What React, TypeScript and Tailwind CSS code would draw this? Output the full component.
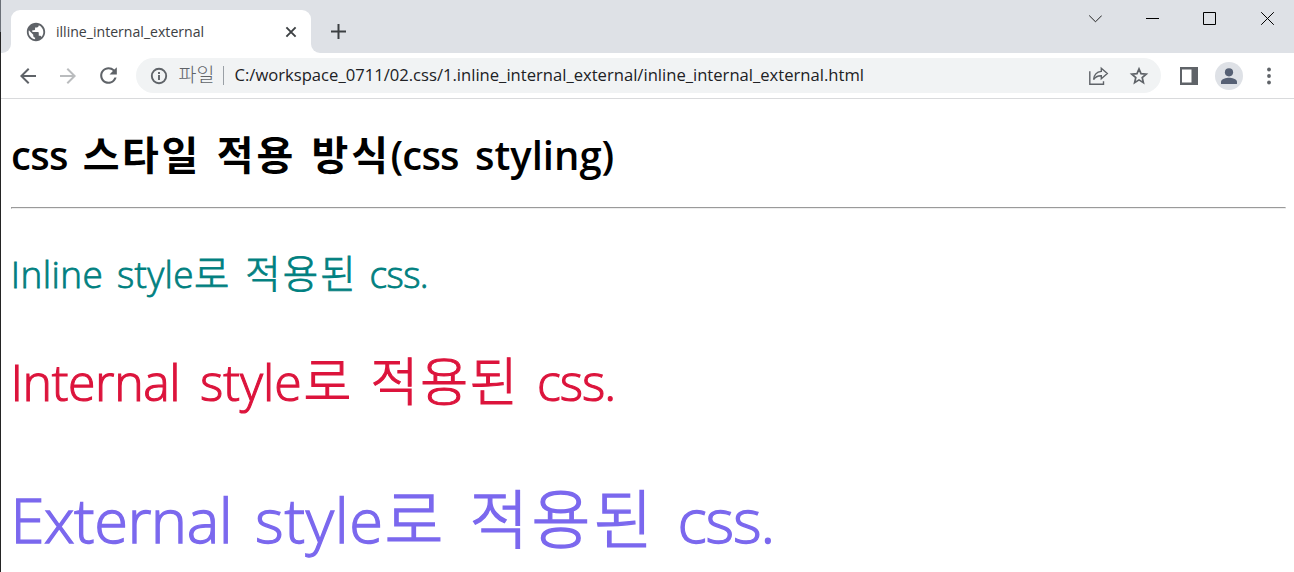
import type { ReactNode } from "react";
import { MdArrowBack, MdArrowForward, MdPublic, MdRefresh } from "react-icons/md";

const latin = "font-['Open_Sans','Noto_Sans_CJK_KR',sans-serif]";
const hangul = "font-['Noto_Sans_CJK_KR',sans-serif]";

function Run({ ko, className, children }: { ko?: boolean; className: string; children: ReactNode }) {
  return <span className={`shrink-0 whitespace-pre ${ko ? hangul : latin} ${className}`}>{children}</span>;
}

function TabStrip() {
  return (
    <div className="flex h-[53px] bg-[#dee1e6]">
      <div className="mt-auto h-2.5 w-2.5 bg-white">
        <div className="h-full w-full rounded-br-[9px] bg-[#dee1e6]" />
      </div>
      <div className="mt-2.5 flex w-[300px] items-center rounded-t-[9px] bg-white pl-[14px] pr-[14px]">
        <MdPublic className="size-[22px] shrink-0 text-[#5f6368]" />
        <span className={`ml-[9px] flex-1 whitespace-nowrap text-[14.1px] text-[#3c4043] ${latin}`}>illine_internal_external</span>
        <svg className="size-3" viewBox="0 0 12 12" fill="none" stroke="#3c4043" strokeWidth="1.9">
          <path d="M1.4 1.4 10.6 10.6M10.6 1.4 1.4 10.6" />
        </svg>
      </div>
      <div className="mt-auto h-2.5 w-2.5 bg-white">
        <div className="h-full w-full rounded-bl-[9px] bg-[#dee1e6]" />
      </div>
      <svg className="ml-[9px] mt-[23px] size-4" viewBox="0 0 16 16" fill="none" stroke="#3c4043" strokeWidth="2">
        <path d="M8.5 1v15M1 8.5h15" />
      </svg>
      <div className="ml-auto mr-[20px] mt-[12px] flex h-[13px]">
        <svg className="mr-[44px] size-[13px]" viewBox="0 0 13 13" fill="none" stroke="#222" strokeWidth="1">
          <path d="M.2 3.5 6.5 9.8 12.8 3.5" />
        </svg>
        <svg className="mr-[44px] size-[13px]" viewBox="0 0 13 13" fill="none" stroke="#000">
          <path d="M0 6.5h13" />
        </svg>
        <svg className="mr-[45px] size-[13px]" viewBox="0 0 13 13" fill="none" stroke="#000">
          <path d="M.5.5h12v12H.5z" />
        </svg>
        <svg className="size-[13px]" viewBox="0 0 13 13" fill="none" stroke="#000">
          <path d="M.2.2 12.8 12.8M12.8.2.2 12.8" />
        </svg>
      </div>
    </div>
  );
}

function InfoIcon() {
  return (
    <svg className="size-[18px] shrink-0" viewBox="0 0 18 18" fill="none" stroke="#5f6368" strokeWidth="1.9">
      <circle cx="9" cy="9" r="7.2" />
      <path d="M9 8v5M9 5v1.9" />
    </svg>
  );
}

function ShareIcon() {
  return (
    <svg className="size-[20px]" viewBox="0 0 20 20" fill="none" stroke="#5f6368" strokeWidth="1.4">
      <path d="M.8 5.3v12.9h13.7v-2.9" />
      <path d="M12.3 2.3 18.3 7.6 12.3 12.8v-3.1c-3.7-.1-6 1-7.7 3.9.4-4.9 3.2-7.7 7.7-8.2z" />
    </svg>
  );
}

function StarIcon() {
  return (
    <svg className="ml-[19.5px] mr-[12.5px] size-[20px]" viewBox="0 0 20 20" fill="none" stroke="#5f6368" strokeWidth="1.7">
      <path d="M10 2.9 12 7.7 17.2 8.1 13.2 11.5 14.4 16.6 10 13.9 5.6 16.6 6.8 11.5 2.8 8.1 8 7.7z" />
    </svg>
  );
}

function Toolbar() {
  return (
    <div className="flex h-[46px] items-center border-b border-[#d9dadc] bg-white pl-[15px]">
      <MdArrowBack className="size-6 text-[#5f6368]" />
      <MdArrowForward className="ml-4 size-6 text-[#babcbe]" />
      <MdRefresh className="ml-4 size-[25px] text-[#5f6368]" />
      <div className="ml-[15px] flex h-[35px] w-[1025px] items-center rounded-full bg-[#f1f3f4] pl-[13.5px]">
        <InfoIcon />
        <span className={`-mt-1 ml-[11px] w-[44px] text-[19.5px] font-light leading-none text-[#5f6368] ${hangul}`}>파일</span>
        <div className="h-[19px] w-px bg-[#9aa0a6]" />
        <span className={`ml-[11px] flex-1 whitespace-nowrap text-[16.63px] leading-none text-[#202124] ${latin}`}>
          C:/workspace_0711/02.css/1.inline_internal_external/inline_internal_external.html
        </span>
        <ShareIcon />
        <StarIcon />
      </div>
      <svg className="ml-[19px] size-[18px]" viewBox="0 0 18 18">
        <path fill="#5f6368" fillRule="evenodd" d="M0 0h18v18H0zM2 2.5v13h9.5v-13z" />
      </svg>
      <svg className="ml-[17px] size-7" viewBox="0 0 28 28">
        <circle cx="14" cy="14" r="14" fill="#dee1e6" />
        <circle cx="14" cy="10.3" r="4.1" fill="#566074" />
        <path fill="#566074" d="M6 21.9v-2.1c0-2.7 5.3-4 8-4s8 1.3 8 4v2.1z" />
      </svg>
      <svg className="ml-[23.5px] h-[18px] w-1" viewBox="0 0 4 18" fill="#5f6368">
        <circle cx="2" cy="2.5" r="1.9" />
        <circle cx="2" cy="9" r="1.9" />
        <circle cx="2" cy="15.5" r="1.9" />
      </svg>
    </div>
  );
}

function Page() {
  return (
    <div className="flex-1 bg-white pl-[10px] pr-2">
      <h1 className="mt-[30px] flex h-12 items-baseline text-[40px] font-semibold leading-[48px] text-black">
        <Run className="w-[71.7px] tracking-[-0.7px]">css</Run>
        <Run ko className="w-[134px] font-bold tracking-[2.6px]">스타일</Run>
        <Run ko className="w-[94.8px] font-bold tracking-[3px]">적용</Run>
        <Run ko className="w-[79px] font-bold tracking-[3px]">방식</Run>
        <Run className="w-[84.5px] tracking-[-0.8px]">(css</Run>
        <Run className="w-[140px]">styling)</Run>
      </h1>
      <div className="mt-[30px] h-0.5 border border-b-[#eeeeee] border-l-[#9a9a9a] border-r-[#eeeeee] border-t-[#9a9a9a]" />
      <p className="mt-[38px] flex h-12 items-baseline text-[37px] font-light leading-[48px] text-[#008080] [-webkit-text-stroke:0.8px]">
        <Run className="-ml-[0.3px] w-[106.3px] tracking-[0.4px]">Inline</Run>
        <Run className="w-[77px] tracking-[0.3px]">style</Run>
        <Run ko className="w-[51.3px] text-[38.4px]">로</Run>
        <Run ko className="w-[124.3px] text-[38.4px] tracking-[2.1px]">적용된</Run>
        <Run className="tracking-[-0.6px]">css.</Run>
      </p>
      <p className="mt-[52px] flex h-16 items-baseline text-[50px] font-light leading-[64px] text-[#dc143c] [-webkit-text-stroke:1.1px]">
        <Run className="-ml-[0.6px] w-[189.6px] tracking-[-0.4px]">Internal</Run>
        <Run className="w-[103.4px]">style</Run>
        <Run ko className="w-[67px] text-[52px]">로</Run>
        <Run ko className="w-[166.6px] text-[52px] tracking-[1.9px]">적용된</Run>
        <Run className="tracking-[-1px]">css.</Run>
      </p>
      <p className="mt-[64px] flex h-20 items-baseline text-[61.5px] font-light leading-[80px] text-[#7b68ee] [-webkit-text-stroke:1.3px]">
        <Run className="-ml-[0.5px] w-[244.6px] tracking-[-0.5px]">External</Run>
        <Run className="w-[129.4px] tracking-[0.7px]">style</Run>
        <Run ko className="w-[85px] text-[64px]">로</Run>
        <Run ko className="w-[208.1px] text-[64px] tracking-[3.2px]">적용된</Run>
        <Run className="tracking-[-1.2px]">css.</Run>
      </p>
    </div>
  );
}

export default function App() {
  return (
    <div className="flex h-[572px] w-[1294px] bg-white">
      <div className="flex w-px shrink-0 flex-col bg-[#242424]">
        <div className="h-8 bg-[#6b7078]" />
      </div>
      <div className="flex min-w-0 flex-1 flex-col">
        <TabStrip />
        <Toolbar />
        <Page />
      </div>
    </div>
  );
}
